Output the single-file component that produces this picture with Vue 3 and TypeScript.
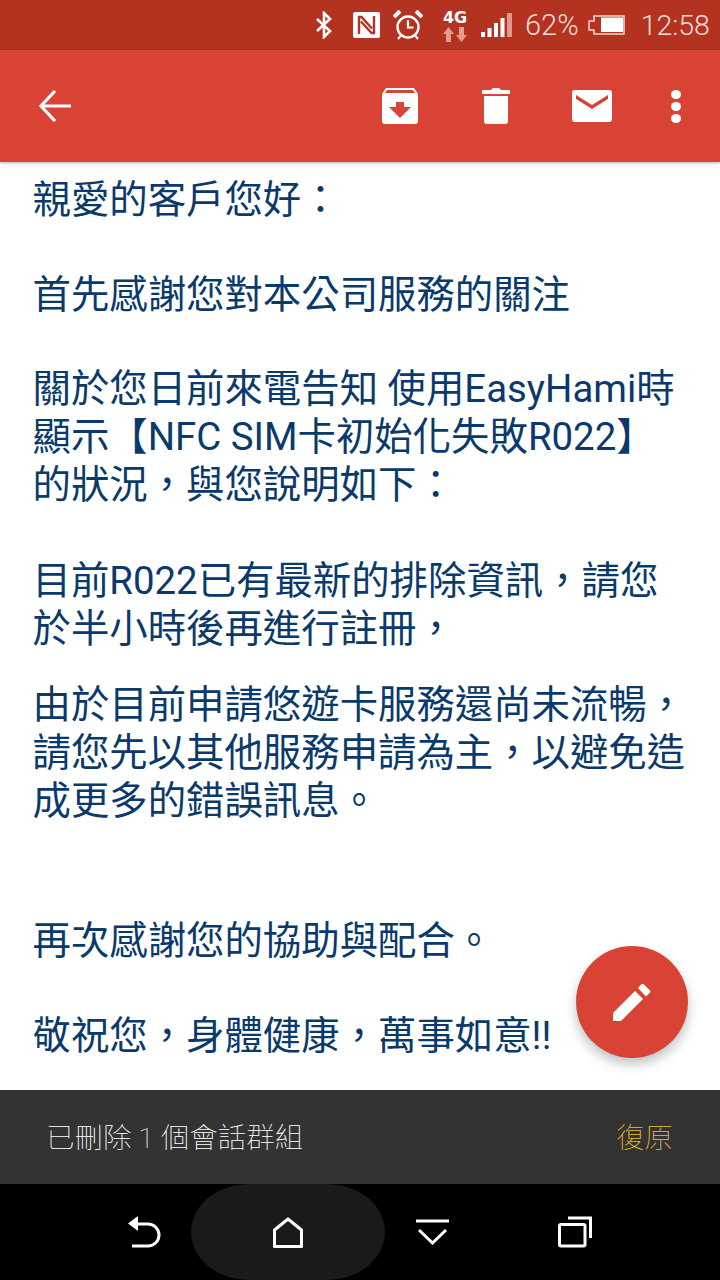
<script setup lang="ts">
interface Block {
  lines: string[];
  gap: number;
}

// gaps differ a little between blocks in the original mail
const blocks: Block[] = [
  { lines: ["親愛的客戶您好："], gap: 47 },
  { lines: ["首先感謝您對本公司服務的關注"], gap: 46 },
  { lines: ["關於您日前來電告知 使用EasyHami時", "顯示【NFC SIM卡初始化失敗R022】", "的狀況，與您說明如下："], gap: 48 },
  { lines: ["目前R022已有最新的排除資訊，請您", "於半小時後再進行註冊，"], gap: 28 },
  { lines: ["由於目前申請悠遊卡服務還尚未流暢，", "請您先以其他服務申請為主，以避免造", "成更多的錯誤訊息。"], gap: 92 },
  { lines: ["再次感謝您的協助與配合。"], gap: 47 },
  { lines: ["敬祝您，身體健康，萬事如意!!"], gap: 0 },
];
</script>

<template>
  <div class="screen">
    <div class="status-bar">
      <svg class="st-bt" width="18" height="28" viewBox="0 0 18 28" fill="none" stroke="#fff" stroke-width="2.6">
        <path d="M2 8l13 12-6 6V2l6 6L2 20" />
      </svg>
      <svg class="st-nfc" width="27" height="26" viewBox="0 0 27 26" fill="none">
        <rect width="27" height="26" rx="2" fill="#fff" />
        <path d="M6 22V5h2.500L19 16.500M21 4v17h-2.500L8 9.500" stroke="#b33220" stroke-width="2.400" />
      </svg>
      <svg class="st-alarm" width="30" height="30" viewBox="0 0 30 30" fill="none" stroke="#fff">
        <circle cx="15" cy="17" r="10.500" stroke-width="2.400" />
        <path d="M15 10v7.500h5.500" stroke-width="2.200" />
        <path d="M1 7l6-6M29 7l-6-6" stroke-width="4" />
        <path d="M7.500 26L5 29M22.500 26l2.500 3" stroke-width="2" />
      </svg>
      <div class="st-net">
        <span class="st-4g">4G</span>
        <svg width="24" height="15" viewBox="0 0 24 15" fill="#e59c90">
          <path d="M5.500 0L11 7H8v8H3V7H0zM18.500 15L24 8h-3V0h-5v8h-3z" />
        </svg>
      </div>
      <svg class="st-signal" width="31" height="24" viewBox="0 0 31 24">
        <rect x="0" y="19" width="4" height="5" fill="#fff" />
        <rect x="6.500" y="15" width="4" height="9" fill="#fff" />
        <rect x="13" y="10" width="4" height="14" fill="#fff" />
        <rect x="19.500" y="5" width="4" height="19" fill="#fff" />
        <rect x="26" y="0" width="5" height="24" fill="#e2998c" />
      </svg>
      <span class="st-pct">62%</span>
      <svg class="st-battery" width="37" height="20" viewBox="0 0 37 20" fill="none">
        <path d="M6 1h30v18H6v-4H1V6h5z" stroke="#f4d5cf" stroke-width="1.500" />
        <rect x="13" y="2.500" width="22" height="14.500" fill="#fff" />
      </svg>
      <span class="st-time">12:58</span>
    </div>

    <header class="app-bar">
      <svg class="back" width="34" height="32" viewBox="0 0 34 32" fill="none" stroke="#fff" stroke-width="3.200">
        <path d="M33 16H3M17 1L3 16l14 15" />
      </svg>
      <svg class="archive" width="36" height="36" viewBox="0 0 36 36">
        <path fill="#fff" fill-rule="evenodd" d="M4 0h28l4 6v27a3 3 0 0 1-3 3H3a3 3 0 0 1-3-3V6zM5 2L3 5h30l-2-3zM14 14v5H7l11 11 11-11h-7v-5z" />
      </svg>
      <svg class="trash" width="28" height="36" viewBox="0 0 28 36">
        <path fill="#fff" d="M9 2l2-2h6l2 2h9v4H0V2zM2 8h24v25a3 3 0 0 1-3 3H5a3 3 0 0 1-3-3z" />
      </svg>
      <svg class="mail" width="40" height="32" viewBox="0 0 40 32">
        <path fill="#fff" fill-rule="evenodd" d="M3 0h34a3 3 0 0 1 3 3v26a3 3 0 0 1-3 3H3a3 3 0 0 1-3-3V3a3 3 0 0 1 3-3zM4 5v4l16 10 16-10V5L20 15z" />
      </svg>
      <div class="dots"><i></i><i></i><i></i></div>
    </header>

    <main class="mail-body">
      <p v-for="(block, i) in blocks" :key="i" :style="{ marginBottom: block.gap + 'px' }">
        <template v-for="(line, j) in block.lines" :key="j">{{ line }}<br /></template>
      </p>
    </main>

    <div class="fab">
      <svg width="38" height="38" viewBox="0 0 38 38">
        <path fill="#fff" d="M0 30L22 8l8 8L8 38H0zM25 5l3-3.500a2 2 0 0 1 3 0l5.500 5.500a2 2 0 0 1 0 3L33 13.500z" />
      </svg>
    </div>

    <div class="snackbar">
      <span class="snack-text">已刪除 1 個會話群組</span>
      <span class="snack-action">復原</span>
    </div>

    <nav class="nav-bar">
      <div class="home-pill"></div>
      <svg class="nav-back" width="34" height="32" viewBox="0 0 34 32" fill="none" stroke="#fff" stroke-width="3">
        <path d="M4 30h16a11 11 0 0 0 0-22H8" />
        <path d="M10 0v15L0 7.500z" fill="#fff" stroke="none" />
      </svg>
      <svg class="nav-home" width="30" height="31" viewBox="0 0 30 31" fill="none" stroke="#fff" stroke-width="3">
        <path d="M15 2L28.500 13v16.500h-27V13z" stroke-linejoin="round" />
      </svg>
      <svg class="nav-down" width="33" height="26" viewBox="0 0 33 26" fill="none" stroke="#fff" stroke-width="3">
        <path d="M0 2h33M3 11l13.500 13L30 11" />
      </svg>
      <svg class="nav-recent" width="34" height="32" viewBox="0 0 34 32" fill="none" stroke="#fff" stroke-width="3">
        <rect x="1.500" y="8.500" width="25.500" height="21.500" rx="1.500" />
        <path d="M10 2h22.500v20" />
      </svg>
    </nav>
  </div>
</template>

<style scoped>
.screen {
  position: relative;
  display: flex;
  flex-direction: column;
  width: 720px;
  height: 1280px;
  overflow: hidden;
  background: #fff;
  font-family: Roboto, "Noto Sans CJK TC", sans-serif;
}

.status-bar {
  display: flex;
  align-items: center;
  flex: none;
  height: 50px;
  padding-left: 315px;
  box-sizing: border-box;
  background: #b33220;
  color: #f6ddd8;
}

.status-bar svg,
.app-bar svg,
.nav-bar svg {
  flex: none;
}

.st-nfc { margin-left: 20px; }
.st-alarm { margin-left: 13px; }

.st-net {
  display: flex;
  flex-direction: column;
  align-items: center;
  width: 24px;
  margin-left: 20px;
}

.st-4g {
  height: 18px;
  font-family: "DejaVu Sans", sans-serif;
  font-size: 16px;
  font-weight: 700;
  line-height: 18px;
  color: #fff;
}

.st-signal { margin-left: 14px; }

.st-pct {
  margin-left: 13px;
  font-size: 29px;
  font-weight: 300;
}

.st-battery { margin-left: 9px; }

.st-time {
  margin-left: 16px;
  font-size: 28.500px;
  font-weight: 300;
}

.app-bar {
  display: flex;
  align-items: center;
  flex: none;
  height: 112px;
  padding-left: 38px;
  box-sizing: border-box;
  background: #d94335;
  box-shadow: 0 1px 3px rgba(0, 0, 0, .3);
  z-index: 1;
}

.archive { margin-left: 310px; }
.trash { margin-left: 64px; }
.mail { margin-left: 62px; }

.dots {
  display: flex;
  flex-direction: column;
  gap: 3px;
  margin-left: 59px;
}

.dots i {
  display: block;
  width: 10px;
  height: 9px;
  border-radius: 50%;
  background: #fff;
}

.mail-body {
  flex: 1;
  padding: 14px 0 0 32.500px;
  overflow: hidden;
  color: #0a3a6c;
  font-size: 38.400px;
  line-height: 48px;
  white-space: nowrap;
}

.mail-body p {
  margin: 0;
}

.fab {
  position: absolute;
  left: 576px;
  top: 946px;
  display: flex;
  align-items: center;
  justify-content: center;
  width: 112px;
  height: 112px;
  border-radius: 50%;
  background: #d94335;
  box-shadow: 0 6px 12px rgba(0, 0, 0, .25);
  z-index: 2;
}

.snackbar {
  display: flex;
  align-items: center;
  justify-content: space-between;
  flex: none;
  height: 94px;
  padding: 0 47px 3px 46px;
  box-sizing: border-box;
  background: #333;
  font-size: 28.500px;
  font-weight: 100;
}

.snack-text { color: #fff; }
.snack-action { color: #f0bc30; }

.nav-bar {
  position: relative;
  display: flex;
  align-items: center;
  flex: none;
  height: 96px;
  padding-left: 128px;
  box-sizing: border-box;
  background: #000;
}

.home-pill {
  position: absolute;
  left: 191px;
  top: 0;
  width: 194px;
  height: 96px;
  border-radius: 58px / 48px;
  background: #1a1a1a;
}

.nav-bar svg { position: relative; }

.nav-home { margin-left: 111px; }
.nav-down { margin-left: 113px; }
.nav-recent { margin-left: 109px; }
</style>
